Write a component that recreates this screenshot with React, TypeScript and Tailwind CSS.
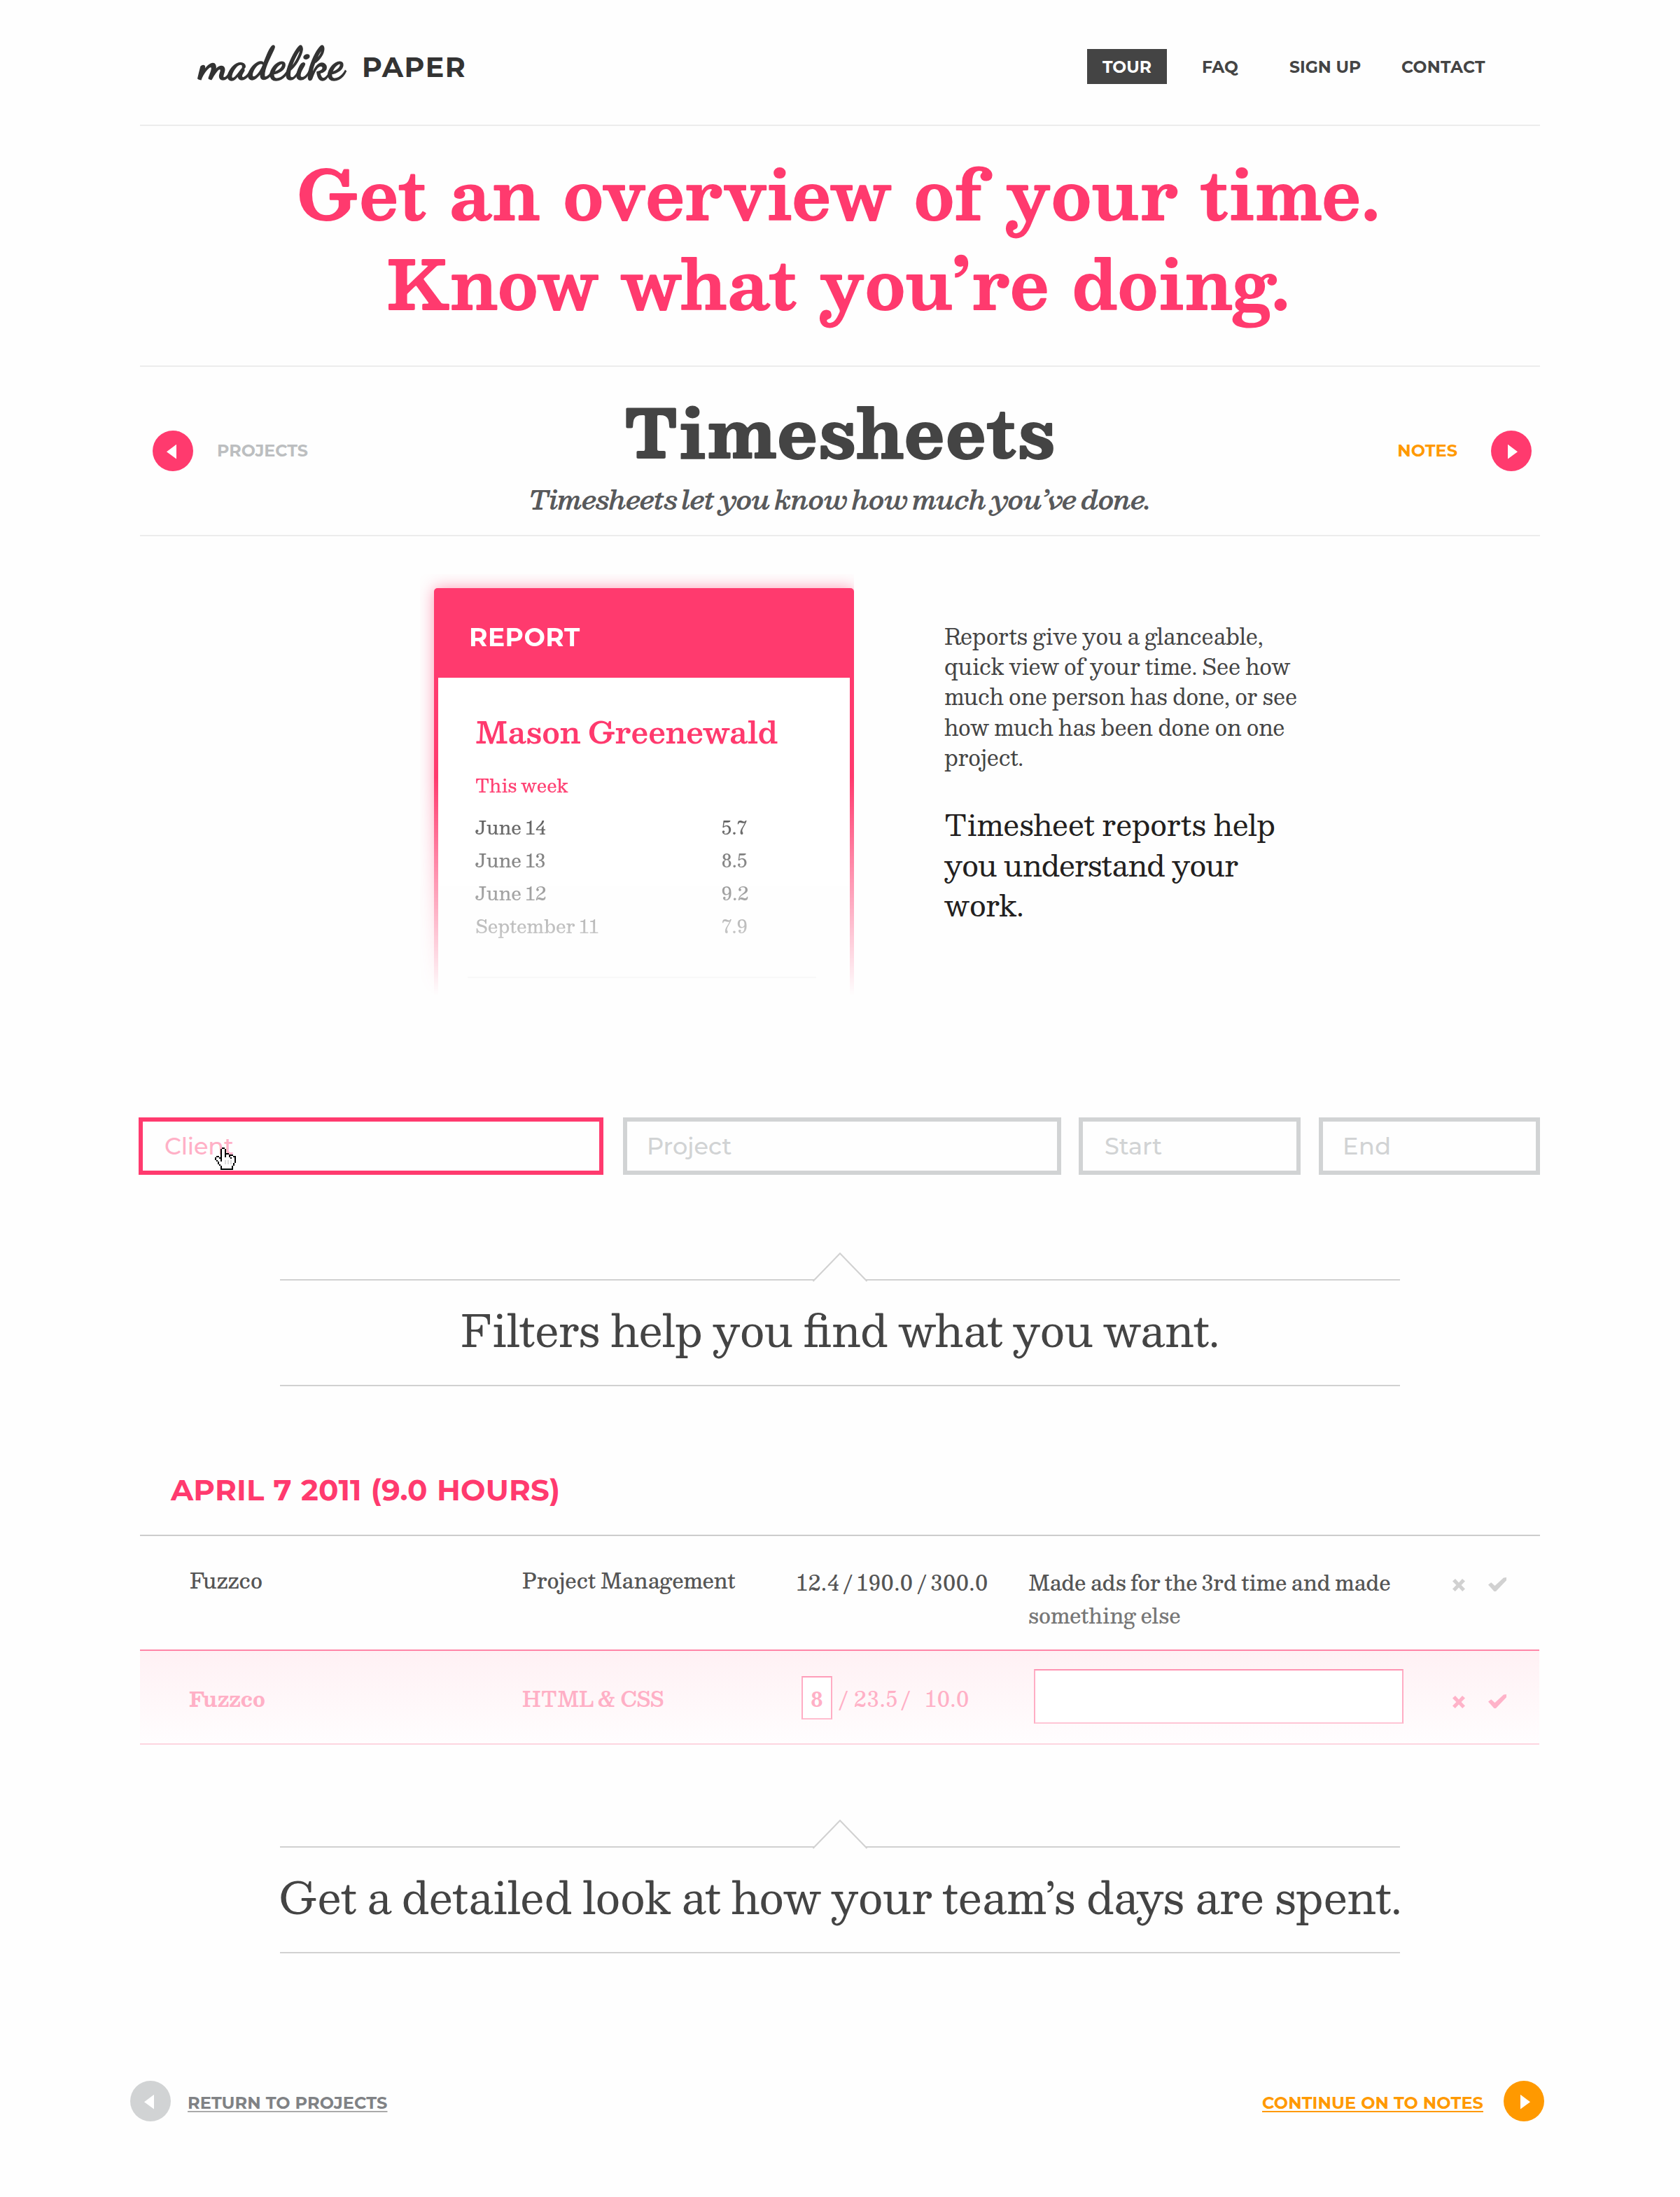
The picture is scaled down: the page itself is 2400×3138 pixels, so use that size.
import React from "react";

const serif = "font-['Besley','DejaVu_Serif',serif]";
const sans = "font-['Montserrat','Inter',sans-serif]";

function ArrowButton({ direction, className }: { direction: "left" | "right"; className: string }) {
  return (
    <svg viewBox="0 0 58 58" className={`size-[58px] shrink-0 ${className}`} aria-hidden="true">
      <circle cx="29" cy="29" r="29" fill="currentColor" />
      <path d={direction === "left" ? "M20 30.2 34 19.8V40.6Z" : "M38 30.2 24 19.8V40.6Z"} fill="#fff" />
    </svg>
  );
}

function Header() {
  return (
    <header className={`flex h-[180px] border-b-2 border-[#ececec] text-[#444] ${sans}`}>
      <div className="mt-[58px] ml-[85px] flex items-baseline whitespace-nowrap text-[#333]">
        <span className="relative top-[2px] w-[232px] font-['Dancing_Script','Lato',cursive] text-[64px] leading-[64px] font-bold [-webkit-text-stroke:1.4px_#333]">
          madelike
        </span>
        <span className="text-[39.5px] leading-[48px] font-bold tracking-[1.6px]">PAPER</span>
      </div>
      <nav className="mt-[70px] mr-px ml-auto grid h-[50px] grid-cols-[114px_50px_125px_160px_197px] text-[23.5px] leading-[51px] font-bold whitespace-nowrap">
        <a className="h-[50px] bg-[#444] text-center text-white">TOUR</a>
        <span />
        <a>FAQ</a>
        <a>SIGN UP</a>
        <a className="tracking-[0.3px]">CONTACT</a>
      </nav>
    </header>
  );
}

const days = [
  { day: "June 14", hours: "5.7" },
  { day: "June 13", hours: "8.5" },
  { day: "June 12", hours: "9.2" },
  { day: "September 11", hours: "7.9" },
];

function ReportCard() {
  return (
    <div className="h-[602px] w-[620px] overflow-hidden pt-5 pl-5 [mask-image:linear-gradient(to_bottom,#000_290px,transparent_602px)]">
      <div className="h-[582px] w-[600px] rounded-t-[5px] border-x-[6px] border-[#ff3a6e] bg-white shadow-[0_0_22px_rgba(255,58,110,0.5)]">
        <div className={`h-[128px] bg-[#ff3a6e] pt-[12px] pl-[44px] text-[36px] leading-[116px] font-bold tracking-[0.5px] text-white ${sans}`}>
          REPORT
        </div>
        <div className={`pt-[51px] pl-[53px] ${serif}`}>
          <h3 className="text-[43.3px] leading-[50px] font-[650] whitespace-nowrap text-[#ff3a6e] [word-spacing:-3px]">Mason Greenewald</h3>
          <p className="mt-[33px] text-[25.8px] leading-[40px] font-medium text-[#ff3a6e] [word-spacing:-2px]">This week</p>
          <dl className="mt-[16px] grid grid-cols-[352px_1fr] text-[26.2px] leading-[47.1px] font-medium text-[#3a3a3a]">
            {days.map((d) => (
              <React.Fragment key={d.day}>
                <dt className="[word-spacing:-2px]">{d.day}</dt>
                <dd className="tracking-[0.7px]">{d.hours}</dd>
              </React.Fragment>
            ))}
          </dl>
        </div>
        <div className="mt-[49px] ml-[42px] h-[2px] w-[498px] bg-[#bbb]" />
      </div>
    </div>
  );
}

const handRows = [
  ".....BB........",
  "....BWWB.......",
  "....BWWB.......",
  "....BWWB.......",
  "....BWWBBB.....",
  "....BWWBWWBBB..",
  ".BB.BWWBWWBWWBB",
  "BWWBBWWWWWWBWWB",
  "BWWWBWWWWWWWWWB",
  ".BWWBWWGWGWGWWB",
  "..BWWWWGWGWGWWB",
  "..BWWWWGWGWGWB.",
  "...BWWWWWWWWWB.",
  "....BWWWWWWWB..",
  "....BWWWWWWWB..",
  "....BBBBBBBBB..",
];

const handColors: Record<string, string> = { B: "#000", W: "#fff", G: "#ddd" };

function HandCursor() {
  return (
    <svg viewBox="0 0 15 16" shapeRendering="crispEdges" className="absolute top-[37px] left-[103px] h-[32px] w-[30px]" aria-hidden="true">
      {handRows.flatMap((row, y) =>
        row.split("").map((c, x) =>
          c === "." ? null : <rect key={`${x}-${y}`} x={x} y={y} width="1" height="1" fill={handColors[c]} />,
        ),
      )}
    </svg>
  );
}

function Filters() {
  return (
    <div className={`mt-[174px] -ml-[2px] flex w-[2002px] text-[33.5px] leading-[70px] font-medium text-[#d1d3d4] ${sans}`}>
      <div className="relative h-[82px] w-[664px] border-[6px] border-[#ff3a6e] pl-[31px] tracking-[-0.2px] text-[#ffb0c6]">
        Client
        <HandCursor />
      </div>
      <div className="ml-[28px] h-[82px] w-[626px] border-[6px] border-[#d1d3d4] pl-[28px]">Project</div>
      <div className="ml-[25px] h-[82px] w-[317px] border-[6px] border-[#d1d3d4] pl-[31px]">Start</div>
      <div className="ml-[26px] h-[82px] w-[316px] border-[6px] border-[#d1d3d4] pl-[28px] tracking-[0.5px]">End</div>
    </div>
  );
}

function Callout({ className, children }: { className: string; children: React.ReactNode }) {
  return (
    <div className={`relative mx-auto h-[153px] w-[1600px] border-y-2 border-[#d1d1d1] text-center whitespace-nowrap text-[#444] ${serif} ${className}`}>
      <svg viewBox="0 0 80 43" className="absolute -top-[41px] left-[760px] h-[43px] w-[80px]" aria-hidden="true">
        <path d="M1.5 42 40 2.2 78.5 42" fill="#fefefe" stroke="#d1d1d1" strokeWidth="2" />
      </svg>
      <p className="-mx-4 text-[62.4px] leading-[140px] [word-spacing:-4px]">{children}</p>
    </div>
  );
}

function RowActions({ className }: { className: string }) {
  return (
    <div className={`flex items-end gap-[33px] ${className}`}>
      <svg viewBox="0 0 18 18" className="h-[18px] w-[18px]" fill="currentColor" aria-hidden="true">
        <path d="M0 3.5 4 0 9 5.6 14 0 18 3.5 12.6 9 18 14.6 14.2 18 9 12.4 3.8 18 0 14.6 5.4 9Z" />
      </svg>
      <svg viewBox="0 0 26 20" className="h-[20px] w-[26px]" fill="currentColor" aria-hidden="true">
        <path d="M0 10.5 4.2 7.2 9.5 12 22 0.6 26 0V4.2L11 20H8.5Z" />
      </svg>
    </div>
  );
}

function Timesheet() {
  return (
    <section className={`mt-[118px] ${serif} text-[29.4px] leading-[47px] whitespace-nowrap`}>
      <h3 className={`h-[96px] border-b-2 border-[#ccc] pl-[44px] text-[42px] leading-[61px] font-bold tracking-[0.2px] text-[#ff3a6e] [word-spacing:1px] ${sans}`}>
        APRIL 7 2011 (9.0 HOURS)
      </h3>
      <div className="grid h-[162px] grid-cols-[475px_392px_331px_606px_auto] items-start pt-[39px] pl-[71px] font-medium text-[#555]">
        <span>Fuzzco</span>
        <span className="[word-spacing:-2px]">Project Management</span>
        <span className="mt-[3px] tracking-[1.1px] [word-spacing:-5.5px]">12.4 / 190.0 / 300.0</span>
        <p className="mt-[3px] [word-spacing:-2.4px]">
          Made ads for the 3rd time and made
          <br />
          <span className="text-[#777]">something else</span>
        </p>
        <RowActions className="mt-[20px] text-[#d1d1d1]" />
      </div>
      <div className="grid h-[136px] w-[1999px] grid-cols-[475px_400px_331px_598px_auto] items-start border-t-2 border-b-2 border-t-[#ff85a7] border-b-[#fdd5e0] bg-linear-to-b from-[#fff1f4] to-[#fffdfe] pl-[71px] font-medium text-[#ffb0c6]">
        <span className="mt-[44px] -ml-px font-bold">Fuzzco</span>
        <span className="mt-[45px] text-[28.9px] font-semibold tracking-[-0.3px] [word-spacing:-2px]">HTML &amp; CSS</span>
        <div className="flex">
          <span className="mt-[36px] -ml-px h-[62px] w-[44px] border-2 border-t-[#ff9db9] border-r-[#ffadc4] border-b-[#ffbed0] border-l-[#ffadc4] bg-white pt-[6px] text-center font-bold">8</span>
          <span className="mt-[44px] ml-[8px] w-[23px]">/</span>
          <span className="mt-[44px] w-[66px] tracking-[1.8px]">23.5</span>
          <span className="mt-[44px] w-[36px]">/</span>
          <span className="mt-[44px] tracking-[1.2px]">10.0</span>
        </div>
        <div className="mt-[26px] h-[78px] w-[528px] border-2 border-t-[#ff94b2] border-r-[#ffadc4] border-b-[#ffc5d5] border-l-[#ffadc4] bg-white" />
        <RowActions className="mt-[62px] text-[#ffb3c9]" />
      </div>
    </section>
  );
}

export default function App() {
  return (
    <div className="h-[3138px] w-[2400px] overflow-hidden bg-[#fefefe]">
      <main className="mx-auto w-[2000px]">
        <Header />

        <h1 className={`h-[344px] border-b-2 border-[#ececec] pt-[31px] pr-[5px] text-center text-[96.5px] leading-[128px] font-bold text-[#ff3a6e] [word-spacing:3px] ${serif}`}>
          Get an overview of your time.
          <br />
          Know what you’re doing.
        </h1>

        <div className="grid h-[242px] grid-cols-[1fr_auto_1fr] items-start border-b-2 border-[#ececec]">
          <div className={`mt-[91px] ml-[18px] flex gap-[34px] text-[23.8px] leading-[58px] font-bold text-[#bcbec0] ${sans}`}>
            <ArrowButton direction="left" className="text-[#ff3a6e]" />
            PROJECTS
          </div>
          <div className={`pt-[31px] text-center whitespace-nowrap ${serif}`}>
            <h2 className="text-[96.5px] leading-[120px] font-[760] tracking-[0.8px] text-[#444]">Timesheets</h2>
            <p className="mt-[14px] text-[37.2px] leading-[48px] font-[560] tracking-[-0.6px] text-[#58595b] italic [word-spacing:-4px]">
              Timesheets let you know how much you’ve done.
            </p>
          </div>
          <div className={`mt-[91px] mr-[12px] flex justify-end gap-[48px] text-[24px] leading-[58px] font-bold text-[#ff9900] ${sans}`}>
            NOTES
            <ArrowButton direction="right" className="text-[#ff3a6e]" />
          </div>
        </div>

        <section className="mt-[54px] ml-[400px] flex">
          <ReportCard />
          <div className={`mt-[67px] ml-[129px] whitespace-nowrap ${serif}`}>
            <p className="text-[31.1px] leading-[43.2px] text-[#444] [word-spacing:-2.2px]">
              Reports give you a glanceable,
              <br />
              quick view of your time. See how
              <br />
              much one person has done, or see
              <br />
              how much has been done on one
              <br />
              project.
            </p>
            <p className="mt-[46px] text-[41.8px] leading-[57.6px] text-[#231f20] [word-spacing:-2px]">
              Timesheet reports help
              <br />
              <span className="tracking-[-0.6px]">you understand your</span>
              <br />
              work.
            </p>
          </div>
        </section>

        <Filters />
        <Callout className="mt-[149px]">Filters help you find what you want.</Callout>
        <Timesheet />
        <Callout className="mt-[145px]">Get a detailed look at how your team’s days are spent.</Callout>

        <footer className={`mt-[182px] -mr-[6px] -ml-[14px] flex items-start justify-between text-[24px] leading-[64px] font-bold whitespace-nowrap decoration-1 underline-offset-[3px] ${sans}`}>
          <div className="flex gap-[24px] text-[#808285]">
            <ArrowButton direction="left" className="text-[#d1d3d4]" />
            <a className="tracking-[0.1px] underline decoration-[#aaa]">RETURN TO PROJECTS</a>
          </div>
          <div className="flex gap-[29px] text-[#ff9900]">
            <a className="tracking-[0.1px] underline">CONTINUE ON TO NOTES</a>
            <ArrowButton direction="right" className="text-[#ff9900]" />
          </div>
        </footer>
      </main>
    </div>
  );
}
